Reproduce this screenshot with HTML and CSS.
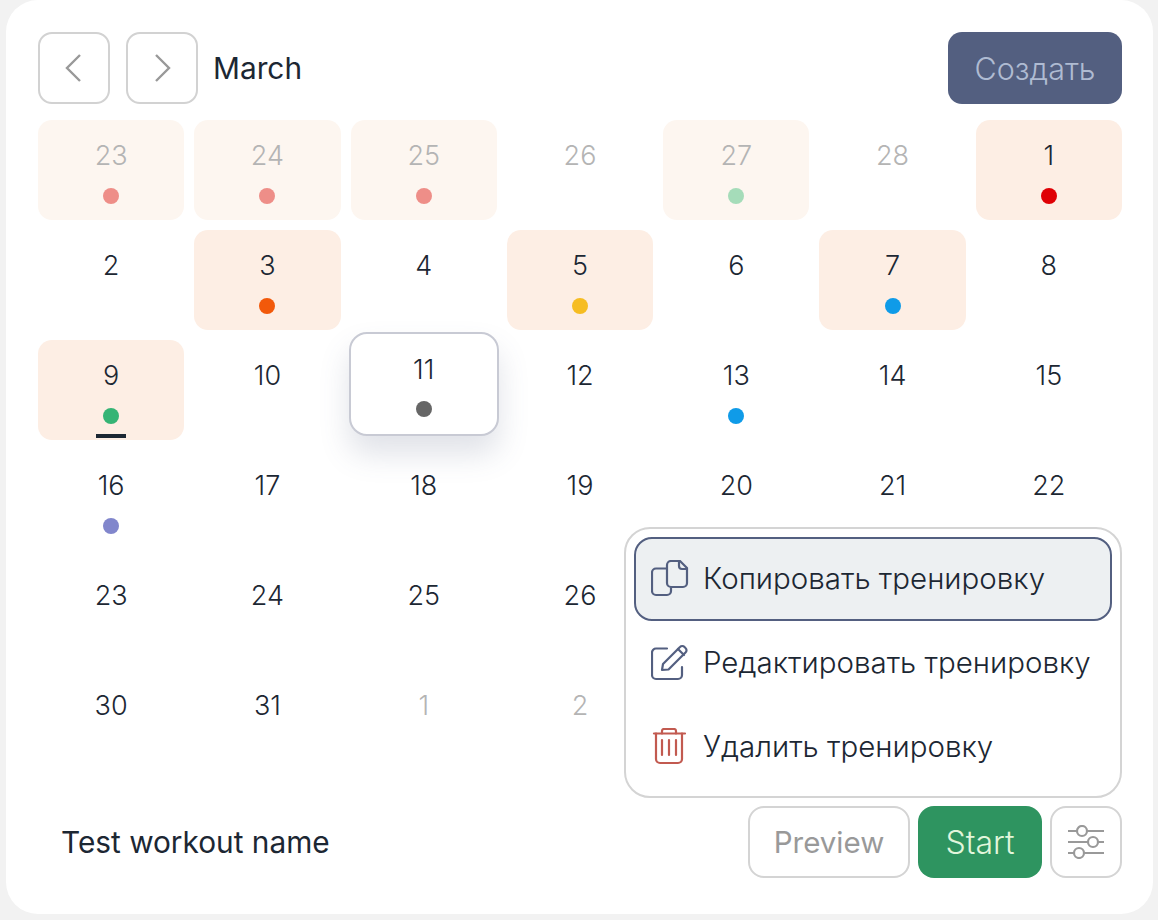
FILE: index.html
```html
<!DOCTYPE html>
<html lang="en">
<head>
<meta charset="utf-8">
<title>Calendar</title>
<link rel="stylesheet" href="styles.css">
</head>
<body>
<main class="card">
  <header class="top">
    <button class="nav"><svg width="18" height="30" viewBox="0 0 18 30"><path d="M15 2 2 15l13 13" class="chev"/></svg></button>
    <button class="nav"><svg width="18" height="30" viewBox="0 0 18 30"><path d="M3 2l13 13L3 28" class="chev"/></svg></button>
    <h1 class="month">March</h1>
    <button class="create">Создать</button>
  </header>
  <section class="board">
    <div class="grid">
      <div class="cell past marked"><span>23</span><i class="dot" style="background:#ee8e88"></i></div>
      <div class="cell past marked"><span>24</span><i class="dot" style="background:#ee8e88"></i></div>
      <div class="cell past marked"><span>25</span><i class="dot" style="background:#ee8e88"></i></div>
      <div class="cell past"><span>26</span></div>
      <div class="cell past marked"><span>27</span><i class="dot" style="background:#a5dcb9"></i></div>
      <div class="cell past"><span>28</span></div>
      <div class="cell marked"><span>1</span><i class="dot" style="background:#df0005"></i></div>
      <div class="cell"><span>2</span></div>
      <div class="cell marked"><span>3</span><i class="dot" style="background:#f2590a"></i></div>
      <div class="cell"><span>4</span></div>
      <div class="cell marked"><span>5</span><i class="dot" style="background:#f6bd22"></i></div>
      <div class="cell"><span>6</span></div>
      <div class="cell marked"><span>7</span><i class="dot" style="background:#0f9be8"></i></div>
      <div class="cell"><span>8</span></div>
      <div class="cell marked today"><span>9</span><i class="dot" style="background:#35b475"></i></div>
      <div class="cell"><span>10</span></div>
      <div class="cell selected"><span>11</span><i class="dot" style="background:#666"></i></div>
      <div class="cell"><span>12</span></div>
      <div class="cell"><span>13</span><i class="dot" style="background:#0f9be8"></i></div>
      <div class="cell"><span>14</span></div>
      <div class="cell"><span>15</span></div>
      <div class="cell"><span>16</span><i class="dot" style="background:#8186cc"></i></div>
      <div class="cell"><span>17</span></div>
      <div class="cell"><span>18</span></div>
      <div class="cell"><span>19</span></div>
      <div class="cell"><span>20</span></div>
      <div class="cell"><span>21</span></div>
      <div class="cell"><span>22</span></div>
      <div class="cell"><span>23</span></div>
      <div class="cell"><span>24</span></div>
      <div class="cell"><span>25</span></div>
      <div class="cell"><span>26</span></div>
      <div class="cell"></div>
      <div class="cell"></div>
      <div class="cell"></div>
      <div class="cell"><span>30</span></div>
      <div class="cell"><span>31</span></div>
      <div class="cell past"><span>1</span></div>
      <div class="cell past"><span>2</span></div>
      <div class="cell past"></div>
      <div class="cell past"></div>
      <div class="cell past"></div>
    </div>
    <div class="menu">
      <div class="item active">
        <svg width="38" height="38" viewBox="0 0 38 38" class="ic"><path d="M15 8.500H5a4 4 0 0 0-4 4V31a4 4 0 0 0 4 4h11a4 4 0 0 0 4-4v-3"/><path d="M20 1h9l7 7v15a4 4 0 0 1-4 4H20a4 4 0 0 1-4-4V5a4 4 0 0 1 4-4Z"/><path d="M28 1v5a3 3 0 0 0 3 3h5"/></svg>
        <span>Копировать тренировку</span>
      </div>
      <div class="item">
        <svg width="38" height="38" viewBox="0 0 38 38" class="ic"><path d="M16 4.500H5a4 4 0 0 0-4 4V31a4 4 0 0 0 4 4h22a4 4 0 0 0 4-4v-8"/><path d="M11 26l1-6L29 3a3 3 0 0 1 4.500 0l1 1a3 3 0 0 1 0 4.500L17.500 25.500Z"/><path d="M27 5l6 6"/></svg>
        <span>Редактировать тренировку</span>
      </div>
      <div class="item">
        <svg width="38" height="38" viewBox="0 0 38 38" class="ic red"><path d="M3 5.500h31"/><path d="M11 5.500V3a2 2 0 0 1 2-2h10a2 2 0 0 1 2 2v2.500"/><path d="M5 5.500V31a4 4 0 0 0 4 4h18a4 4 0 0 0 4-4V5.500"/><path d="M11 12v15M18 12v15M25 12v15"/></svg>
        <span>Удалить тренировку</span>
      </div>
    </div>
  </section>
  <footer class="bottom">
    <div class="name">Test workout name</div>
    <button class="ghost preview">Preview</button>
    <button class="start">Start</button>
    <button class="ghost tune"><svg width="36" height="34" viewBox="0 0 36 34" class="ic grey"><path d="M.5 6H9M19 6h16.500M.5 17H20M30 17h5.500M.5 28H6M16 28h19.500"/><circle cx="14" cy="6" r="5"/><circle cx="25" cy="17" r="5"/><circle cx="11" cy="28" r="5"/></svg></button>
  </footer>
</main>
</body>
</html>
```
FILE: styles.css
```css
* { box-sizing: border-box; }
html, body { margin: 0; height: 100%; }
body {
  background: #f2f2f2;
  padding: 0 5px 6px 6px;
  font-family: Inter, "Noto Sans", sans-serif;
  color: #1c2733;
}
button { font-family: inherit; cursor: pointer; }
.card {
  height: 914px;
  background: #fff;
  border-radius: 32px;
  padding: 32px 31px 0 32px;
  display: flex;
  flex-direction: column;
}
.top { display: flex; align-items: center; gap: 16px; height: 72px; }
.nav {
  width: 72px; height: 72px;
  background: #fff;
  border: 2px solid #d2d2d2;
  border-radius: 14px;
  display: flex; align-items: center; justify-content: center;
  padding: 0;
}
.chev { fill: none; stroke: #999; stroke-width: 2.4; }
.month { margin: 0 0 0 -1px; font-size: 29.800px; font-weight: 400; line-height: 72px; flex: 1; }
.create {
  width: 174px; height: 72px;
  background: #535f80;
  color: #afbbd2;
  border: 0;
  border-radius: 14px;
  font-size: 30.500px;
  font-weight: 300;
}
.board { position: relative; margin-top: 16px; }
.grid {
  display: grid;
  grid-template-columns: repeat(7, 1fr);
  grid-auto-rows: 100px;
  gap: 10px;
}
.cell {
  position: relative;
  border-radius: 14px;
  text-align: center;
  padding-top: 19px;
  font-size: 27px;
  font-weight: 300;
  line-height: 34px;
}
.cell span { display: block; }
.marked { background: #fdeee4; }
.past { color: #b4b4b4; }
.past.marked { background: #fdf6f0; }
.dot {
  position: absolute;
  left: 50%; top: 68px;
  width: 16px; height: 16px;
  margin-left: -8px;
  border-radius: 50%;
}
.today::after {
  content: "";
  position: absolute;
  left: 50%; bottom: 2px;
  width: 30px; height: 4px;
  margin-left: -15px;
  background: #1c2733;
}
.selected {
  margin: -8px -2px 4px;
  background: #fff;
  border: 2px solid #c8cad4;
  border-radius: 18px;
  box-shadow: 0 18px 30px rgba(83, 95, 128, .18);
}
.selected .dot { top: 67px; }
.menu {
  position: absolute;
  right: 0; top: 407px;
  width: 498px; height: 271px;
  background: #fff;
  border: 2px solid #d4d4d4;
  border-radius: 26px;
  padding: 8px;
}
.item {
  height: 84px;
  display: flex; align-items: center;
  gap: 14px;
  padding-left: 15px;
  font-size: 29.500px;
  font-weight: 300;
  border: 2px solid transparent;
  border-radius: 18px;
}
.item span { margin-top: -2px; }
.item.active { background: #edf0f2; border-color: #535f80; }
.ic { fill: none; stroke: #535f80; stroke-width: 2.2; stroke-linejoin: round; stroke-linecap: round; flex: none; }
.ic.red { stroke: #c25a50; }
.ic.grey { stroke: #999; }
.bottom { display: flex; align-items: center; gap: 8px; margin-top: 36px; height: 72px; }
.name { flex: 1; padding-left: 23px; font-size: 29.800px; }
.ghost {
  height: 72px;
  background: #fff;
  border: 2px solid #d4d4d4;
  border-radius: 16px;
  color: #999;
}
.preview { width: 162px; font-size: 29.500px; }
.start {
  width: 124px; height: 72px;
  background: #2e9460;
  color: #e2f6dc;
  border: 0;
  border-radius: 16px;
  font-size: 32px;
  font-weight: 300;
}
.tune { width: 72px; padding: 0; display: flex; align-items: center; justify-content: center; }
```
